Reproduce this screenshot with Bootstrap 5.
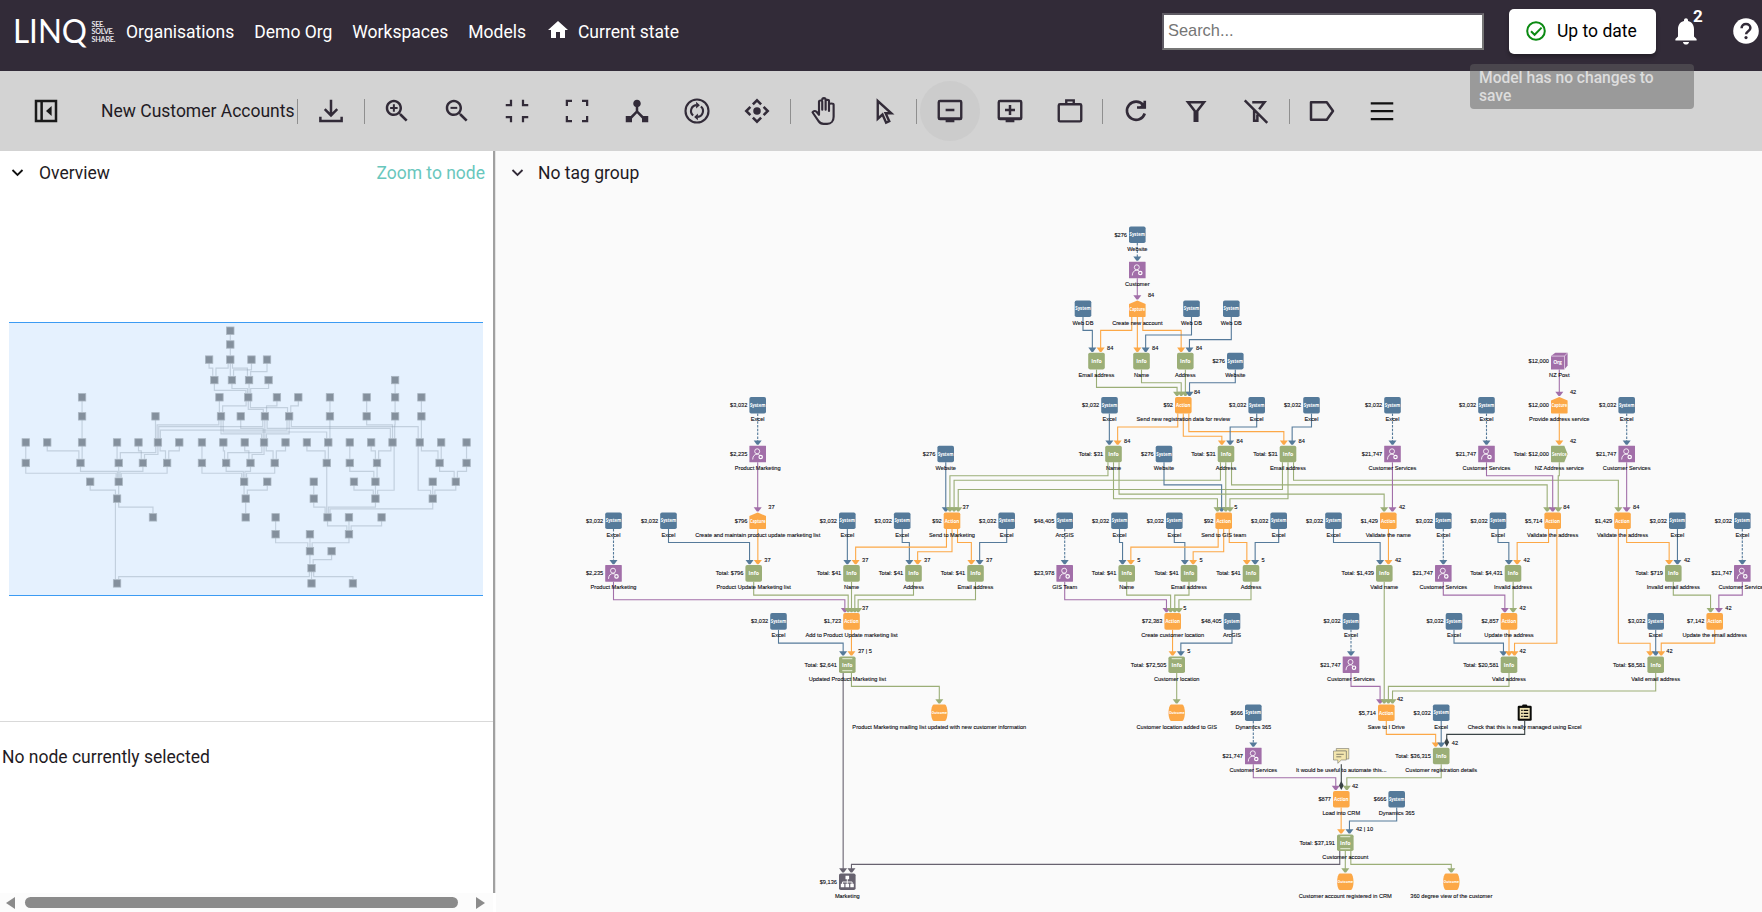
<!DOCTYPE html>
<html lang="en">
<head>
<meta charset="utf-8">
<title>LINQ - New Customer Accounts</title>
<link href="https://cdn.jsdelivr.net/npm/bootstrap@5.3.0/dist/css/bootstrap.min.css" rel="stylesheet">
<style>
body{font-family:Roboto,"Liberation Sans",sans-serif;font-size:17.5px;color:#1f1b24;overflow:hidden;background:#fff}
.topbar{height:71px;background:#322b38;padding-left:12px;flex:none}
.topbar .crumb{color:#fff;text-decoration:none;margin-right:20px;white-space:nowrap;line-height:24px}
.logo{width:106px;height:34px;margin-right:8px;flex:none}
.search{width:322px;height:37px;border:2px solid #767676;border-color:#5f5b64 #767676 #767676 #5f5b64;border-radius:0;font:16.4px "Liberation Sans",sans-serif;padding:0 4px 2px;margin-right:25px}
.search::placeholder{color:#757575}
.btn-state{width:147px;height:45px;background:#fff;border-radius:5px;box-shadow:0 3px 4px rgba(0,0,0,.3);font-size:17.5px;color:#000;padding:0 0 0 16px;margin-right:18px}
.bell{width:24px;height:30px;margin-right:34px}
.bell sup{position:absolute;left:19px;top:-10px;font:700 17px Roboto,sans-serif;color:#fff}
.hint{position:absolute;left:1470px;top:64px;width:224px;height:45px;border-radius:4px;background:rgba(97,97,97,.5);color:rgba(255,255,255,.68);font-weight:500;font-size:15.6px;line-height:18px;padding:5px 9px;z-index:5}
.toolbar{height:80px;background:#d3d3d3;padding-left:16px;flex:none}
.tool{width:60px;height:60px;border:0;background:none;border-radius:50%;padding:0;flex:none;display:flex;align-items:center;justify-content:center;color:#322b38}
.tool svg{width:30px;height:30px}
.tool.on{background:#cccccc}
.rule{width:6.2px;height:25px;flex:none;display:flex;justify-content:center}
.rule::before{content:"";width:1px;background:#8f8f8f}
.model-name{width:218px;padding-left:25px;white-space:nowrap}
.side{width:493px;flex:none;background:#fff}
.split{width:3px;background:linear-gradient(90deg,#a0a0a0 67%,#e4e4e4 67%);flex:none;margin-bottom:19px}
.head{height:44px;padding-left:10px;flex:none}
.head svg{width:16px;height:16px;margin-right:13px}
.zoomlink{color:#69c7bd;text-decoration:none}
.mapwrap{height:527px;border-bottom:1px solid #d9d9d9;padding:127px 0 0 9px}
.mini{width:474px;height:274px;background:#e5f1fe;border-top:1px solid #3b9bf3;border-bottom:1px solid #3b9bf3;display:block}
.sbar{height:19px;padding:0 0 0 5px;background:#fcfcfc}
.sbar .thumb{height:11px;width:433px;border-radius:6px;background:#8b8b8b;margin:0 17px 0 9px}
.canvas{background:#fafafa;min-width:0}
.graph{display:block;width:1266px;height:717px}
.graph text{font-family:"Liberation Sans",Arial,sans-serif;font-size:5.67px;fill:#08080e;stroke:#08080e;stroke-width:.1px}
.graph .tag{fill:#fff;stroke:none;font-weight:700;font-family:"Open Sans","Liberation Sans",sans-serif}
</style>
</head>
<body>
<div class="d-flex flex-column vh-100">
<nav class="topbar d-flex align-items-start position-relative">
  <div class="d-flex align-items-center flex-grow-1" style="height:63px">
    <svg class="logo" viewBox="-3 0 106 34">
      <text x="-2" y="28" font-family="Lato" font-weight="400" font-size="33.5" fill="#fff" textLength="74" lengthAdjust="spacingAndGlyphs">LINQ</text>
      <g font-family="Lato" font-weight="700" font-size="7.2" fill="#e8e6ea"><text x="76.500" y="11.500" textLength="13">SEE.</text><text x="76.500" y="19.200" textLength="22.500">SOLVE.</text><text x="76.500" y="26.900" textLength="24">SHARE.</text></g>
    </svg>
    <a class="crumb" href="#">Organisations</a>
    <a class="crumb" href="#">Demo Org</a>
    <a class="crumb" href="#">Workspaces</a>
    <a class="crumb" href="#">Models</a>
    <a class="crumb d-flex align-items-center" href="#"><svg width="24" height="24" viewBox="0 0 24 24" fill="#fff" class="me-2" style="margin-top:-3px"><path d="M10 20v-6h4v6h5v-8h3L12 3 2 12h3v8z"/></svg>Current state</a>
  </div>
  <div class="d-flex align-items-center" style="height:62px">
    <input class="search" placeholder="Search...">
    <button class="btn btn-state d-flex align-items-center"><svg width="20" height="20" viewBox="0 0 20 20" fill="none" stroke="#0b8a12" stroke-width="2" class="me-0"><circle cx="10" cy="10" r="8.8"/><path d="M5 10.2l3.6 3.6L15.6 6.6"/></svg><span style="margin-left:11px">Up to date</span></button>
    <div class="bell position-relative"><svg width="24" height="30" viewBox="0 0 24 30" fill="#fff"><path d="M12 28.5c1.7 0 3-1.2 3-2.6H9c0 1.4 1.3 2.6 3 2.6zM20 20.5v-7.3c0-4.2-2.2-7.2-6-8.1v-.8C14 3 13.100 2.200 12 2.200S10 3 10 4.300v.8c-3.800.9-6 3.900-6 8.100v7.300l-2.600 2.600v1.400h21.200v-1.400z"/></svg><sup>2</sup></div>
    <svg width="28" height="28" viewBox="0 0 28 28" style="margin-right:2px"><circle cx="14" cy="14" r="12.800" fill="#fff"/><path d="M9.600 11.200C9.600 8.500 11.500 7 14 7s4.400 1.600 4.400 4c0 3.200-4.300 3.200-4.300 6.200" fill="none" stroke="#322b38" stroke-width="2.500"/><circle cx="14" cy="20.600" r="1.600" fill="#322b38"/></svg>
  </div>
  <div class="hint">Model has no changes to save</div>
</nav>

<div class="toolbar d-flex align-items-center">
  <button class="tool" style="color:#1a1a1a"><svg viewBox="0 0 24 24"><path fill="none" stroke="currentColor" stroke-width="2" d="M4 4h16v16H4zM8.500 4v16"/><path fill="currentColor" d="M16.500 8v8l-4.500-4z"/></svg></button>
  <div class="model-name">New Customer Accounts</div>
  <div class="rule"></div>
  <button class="tool" style="margin-left:1px"><svg viewBox="0 0 24 24"><path fill="none" stroke="currentColor" stroke-width="2" d="M12 3v12M7 10.500l5 5 5-5M3.500 16.500V20h17v-3.500"/></svg></button>
  <div class="rule"></div>
  <button class="tool"><svg viewBox="0 0 24 24" fill="currentColor"><path d="M15.500 14h-.79l-.28-.27C15.410 12.590 16 11.110 16 9.500 16 5.910 13.090 3 9.500 3S3 5.910 3 9.500 5.910 16 9.500 16c1.610 0 3.090-.59 4.230-1.570l.27.28v.79l5 4.990L20.490 19l-4.990-5zm-6 0C7.010 14 5 11.990 5 9.500S7.010 5 9.500 5 14 7.010 14 9.500 11.990 14 9.500 14z"/><path d="M12.500 10.300h-2.200v2.200H8.700v-2.200H6.500V8.700h2.200V6.500h1.600v2.200h2.200z"/></svg></button>
  <button class="tool"><svg viewBox="0 0 24 24" fill="currentColor"><path d="M15.500 14h-.79l-.28-.27C15.410 12.590 16 11.110 16 9.500 16 5.910 13.090 3 9.500 3S3 5.910 3 9.500 5.910 16 9.500 16c1.610 0 3.090-.59 4.230-1.570l.27.28v.79l5 4.990L20.490 19l-4.990-5zm-6 0C7.010 14 5 11.990 5 9.500S7.010 5 9.500 5 14 7.010 14 9.500 11.990 14 9.500 14z"/><path d="M6.800 8.700h5.400v1.600H6.800z"/></svg></button>
  <button class="tool"><svg viewBox="0 0 24 24" fill="none" stroke="currentColor" stroke-width="1.800"><path d="M3 7.200h4.200V3M16.800 3v4.200H21M3 16.800h4.200V21M21 16.800h-4.200V21"/></svg></button>
  <button class="tool"><svg viewBox="0 0 24 24" fill="none" stroke="currentColor" stroke-width="1.800"><path d="M3.900 8V3.900H8M16 3.900h4.100V8M3.900 16v4.100H8M20.100 16v4.100H16"/></svg></button>
  <button class="tool"><svg viewBox="0 0 24 24" fill="currentColor"><path d="M17 16l-4-4V8.820C14.160 8.400 15 7.300 15 6c0-1.660-1.340-3-3-3S9 4.340 9 6c0 1.300.84 2.400 2 2.820V12l-4 4H3v5h5v-3.050l4-4.200 4 4.200V21h5v-5h-4z"/></svg></button>
  <button class="tool"><svg viewBox="0 0 24 24" fill="none" stroke="currentColor" stroke-width="1.700"><circle cx="12" cy="12" r="9.200"/><path d="M8.900 15.600A4.700 4.700 0 0 1 11.500 7.300M15.100 8.400a4.700 4.700 0 0 1-2.600 8.300"/><path fill="currentColor" stroke="none" d="M11.300 4.600l3 2.700-3 2.700zM12.700 14l-3 2.700 3 2.700z"/></svg></button>
  <button class="tool"><svg viewBox="0 0 24 24" fill="none" stroke="currentColor" stroke-width="2"><path d="M8.700 6.700L12 3.400l3.300 3.300M8.700 17.300l3.300 3.300 3.300-3.300M6.700 8.700L3.400 12l3.300 3.300M17.300 8.700l3.300 3.300-3.300 3.300"/><circle cx="12" cy="12" r="3" fill="currentColor" stroke="none"/></svg></button>
  <div class="rule"></div>
  <button class="tool"><svg viewBox="0 0 24 24" fill="none" stroke="currentColor" stroke-width="1.700" stroke-linejoin="round" stroke-linecap="round"><path d="M8 12.500V4.400M8 4.400c0-1 2.600-1 2.600 0V11M10.600 3c0-1.700 2.700-1.700 2.700 0v8M13.300 4c0-1.200 2.700-1.200 2.700 0v8M16 7c0-1.400 3.700-1.400 3.700 0v9.500c0 3.500-2 5.800-5.200 5.800h-2.800c-2 0-3.200-.7-4.200-2.400L2.800 13c1-1.400 2.400-1.200 3.200-.4l2 2.400V12"/></svg></button>
  <button class="tool"><svg viewBox="0 0 24 24" fill="none" stroke="currentColor" stroke-width="1.900"><path d="M7 4v14.200l3.800-3.400 2.900 6.500 2.500-1.100-2.900-6.400h4.600z"/></svg></button>
  <div class="rule"></div>
  <button class="tool on"><svg viewBox="0 0 24 24" fill="none" stroke="currentColor" stroke-width="1.900"><rect x="3" y="4" width="18" height="14.500" rx="1"/><path d="M8.500 11.200h7M3 18h18M8.500 20h7" stroke-width="2"/></svg></button>
  <button class="tool"><svg viewBox="0 0 24 24" fill="none" stroke="currentColor" stroke-width="1.900"><rect x="3" y="4" width="18" height="14.500" rx="1"/><path d="M8 11.200h8M12 7.200v8M3 18h18M8.500 20h7" stroke-width="2"/></svg></button>
  <button class="tool"><svg viewBox="0 0 24 24" fill="none" stroke="currentColor" stroke-width="1.900"><rect x="3" y="6.600" width="18" height="13.700" rx="1"/><path d="M9 6.600V3.500h6v3.100"/></svg></button>
  <div class="rule"></div>
  <button class="tool"><svg viewBox="0 0 24 24" fill="none" stroke="currentColor" stroke-width="2.100"><path d="M17.800 7.300A7.300 7.300 0 1 0 19 14"/><path d="M19 3.800v5.400h-6.200"/><path d="M19.500 4v5.700h-5.700z" fill="currentColor" stroke="none"/></svg></button>
  <button class="tool"><svg viewBox="0 0 24 24" fill="none" stroke="currentColor" stroke-width="2"><path d="M5.600 5h12.800L13 12v7.800h-2V12z"/></svg></button>
  <button class="tool"><svg viewBox="0 0 24 24" fill="none" stroke="currentColor" stroke-width="2"><path d="M9 5h9.800l-4.300 5.600M10.500 11.500v8.300h2.600v-5M3 3.500l18 18"/></svg></button>
  <div class="rule"></div>
  <button class="tool"><svg viewBox="0 0 24 24" fill="none" stroke="currentColor" stroke-width="2" stroke-linejoin="round"><path d="M3.200 5h12.600l5 7-5 7H3.200z"/></svg></button>
  <button class="tool" style="color:#111"><svg viewBox="0 0 24 24" fill="none" stroke="currentColor" stroke-width="2"><path d="M3 5h18M3 12h18M3 19h18" transform="translate(0 1.300) scale(1 .9)"/></svg></button>
</div>

<div class="d-flex flex-grow-1" style="min-height:0">
  <aside class="side d-flex flex-column">
    <div class="head d-flex align-items-center"><svg viewBox="0 0 16 16" fill="none" stroke="#111" stroke-width="1.800"><path d="M2.500 5L7.500 10l5-5"/></svg><span>Overview</span><a class="zoomlink ms-auto me-2" href="#">Zoom to node</a></div>
    <div class="mapwrap"><svg class="mini" id="mini" viewBox="9 323 474 272"></svg></div>
    <div class="flex-grow-1" style="padding:22px 2px">No node currently selected</div>
    <div class="sbar d-flex align-items-center"><svg width="11" height="12" viewBox="0 0 11 12"><path d="M10 0v12L1 6z" fill="#8b8b8b"/></svg><div class="thumb"></div><svg width="11" height="12" viewBox="0 0 11 12"><path d="M1 0v12l9-6z" fill="#8b8b8b"/></svg></div>
  </aside>
  <div class="split"></div>
  <main class="canvas flex-grow-1">
    <div class="head d-flex align-items-center" style="padding-left:13px"><svg viewBox="0 0 16 16" fill="none" stroke="#322b38" stroke-width="1.800"><path d="M3.500 5L8.500 10l5-5"/></svg><span>No tag group</span></div>
    <svg class="graph" id="graph" viewBox="496 195 1266 717"></svg>
  </main>
</div>
</div>
<script src="https://cdn.jsdelivr.net/npm/bootstrap@5.3.0/dist/js/bootstrap.bundle.min.js"></script>
<script>
const B='#557a9a',O='#fca847',G='#9bae77',P='#a26fa9',D='#67626f',K='#3b4446';
const colour={S:B,P:P,C:O,A:O,U:O,I:G,J:G,L:G,V:G,R:P,M:D,N:K,T:K};
// rows: y, then nodes as [id, x, type, label, cost, count]
const rows=[
[234.7,['a1',1137.3,'S','Website','$276']],
[270,['b1',1137.3,'P','Customer']],
[308.7,['c1',1083,'S','Web DB'],['c2',1137.3,'C','Create new account','','84'],['c3',1191.5,'S','Web DB'],['c4',1231.3,'S','Web DB']],
[361.1,['d1',1096.5,'I','Email address','','84'],['d2',1141.5,'I','Name','','84'],['d3',1185.3,'I','Address','','84'],['d4',1235.3,'S','Website','$276'],['d5',1559.3,'R','NZ Post','$12,000']],
[405.3,['e0',757.7,'S','Excel','$3,032'],['e1',1109.5,'S','Excel','$3,032'],['e2',1183.3,'A','Send new registration data for review','$92','84'],['e3',1256.7,'S','Excel','$3,032'],['e4',1311.5,'S','Excel','$3,032'],['e5',1392.5,'S','Excel','$3,032'],['e6',1486.5,'S','Excel','$3,032'],['e7',1559.3,'C','Provide address service','$12,000','42'],['e8',1626.7,'S','Excel','$3,032']],
[454,['f0',757.7,'P','Product Marketing','$2,235'],['f1',945.7,'S','Website','$276'],['f2',1113.5,'I','Name','Total: $31','84'],['f3',1164,'S','Website','$276'],['f4',1226,'I','Address','Total: $31','84'],['f5',1288,'I','Email address','Total: $31','84'],['f6',1392.5,'P','Customer Services','$21,747'],['f7',1486.5,'P','Customer Services','$21,747'],['f8',1559.3,'V','NZ Address service','Total: $12,000','42'],['f9',1626.7,'P','Customer Services','$21,747']],
[520.8,['g0',613.5,'S','Excel','$3,032'],['g1',668.5,'S','Excel','$3,032'],['g2',757.7,'C','Create and maintain product update marketing list','$796','37'],['g3',847.3,'S','Excel','$3,032'],['g4',902.2,'S','Excel','$3,032'],['g5',952,'A','Send to Marketing','$92','37'],['g6',1006.7,'S','Excel','$3,032'],['g7',1064.7,'S','ArcGIS','$48,405'],['g8',1119.5,'S','Excel','$3,032'],['g9',1174.3,'S','Excel','$3,032'],['ga',1223.7,'A','Send to GIS team','$92','5'],['gb',1278.7,'S','Excel','$3,032'],['gc',1333.5,'S','Excel','$3,032'],['gd',1388.3,'A','Validate the name','$1,429','42'],['ge',1443.3,'S','Excel','$3,032'],['gf',1498,'S','Excel','$3,032'],['gg',1552.7,'A','Validate the address','$5,714','84'],['gh',1622.5,'A','Validate the address','$1,429','84'],['gi',1677.3,'S','Excel','$3,032'],['gj',1742.3,'S','Excel','$3,032']],
[573.4,['h0',613.5,'P','Product Marketing','$2,235'],['h1',753.7,'I','Product Update Marketing list','Total: $796','37'],['h2',851.5,'I','Name','Total: $41','37'],['h3',913.5,'I','Address','Total: $41','37'],['h4',975.5,'I','Email address','Total: $41','37'],['h5',1064.7,'P','GIS Team','$23,978'],['h6',1126.7,'I','Name','Total: $41','5'],['h7',1189,'I','Email address','Total: $41','5'],['h8',1251,'I','Address','Total: $41','5'],['h9',1384.3,'I','Valid name','Total: $1,439','42'],['ha',1443.3,'P','Customer Services','$21,747'],['hb',1513,'I','Invalid address','Total: $4,431','42'],['hc',1673.3,'I','Invalid email address','Total: $719','42'],['hd',1742.3,'P','Customer Services','$21,747']],
[621.4,['i0',778.5,'S','Excel','$3,032'],['i1',851.5,'A','Add to Product Update marketing list','$1,723','37'],['i2',1172.7,'A','Create customer location','$72,383','5'],['i3',1232,'S','ArcGIS','$48,405'],['i4',1351,'S','Excel','$3,032'],['i5',1454,'S','Excel','$3,032'],['i6',1509,'A','Update the address','$2,857','42'],['i7',1655.7,'S','Excel','$3,032'],['i8',1714.7,'A','Update the email address','$7,142','42']],
[664.7,['j0',847.3,'L','Updated Product Marketing list','Total: $2,641','37 | 5'],['j1',1176.7,'J','Customer location','Total: $72,505','5'],['j2',1351,'P','Customer Services','$21,747'],['j3',1509,'I','Valid address','Total: $20,581','42'],['j4',1655.7,'I','Valid email address','Total: $8,581','42']],
[712.7,['k0',939.3,'U','Product Marketing mailing list updated with new customer information'],['k1',1176.7,'U','Customer location added to GIS'],['k2',1253.3,'S','Dynamics 365','$666'],['k3',1386.3,'A','Save to I Drive','$5,714','42'],['k4',1441.2,'S','Excel','$3,032'],['k5',1524.7,'N','Check that this is really managed using Excel']],
[756,['l0',1253.3,'P','Customer Services','$21,747'],['l1',1341.3,'T','It would be useful to automate this...'],['l2',1441.2,'I','Customer registration details','Total: $36,315','42']],
[799.3,['m0',1341.3,'A','Load into CRM','$877','42'],['m1',1396.7,'S','Dynamics 365','$666']],
[842.7,['n0',1345.3,'L','Customer account','Total: $37,191','42 | 10']],
[881.8,['o0',847.3,'M','Marketing','$9,136'],['o1',1345.3,'U','Customer account registered in CRM'],['o2',1451.3,'U','360 degree view of the customer']]
];
const nodes={};
rows.forEach(([y,...list])=>list.forEach(([id,x,t,label,cost,n])=>nodes[id]={id,x,y,t,label,cost,n}));
// links: source target level of the bend, or its y when above 100
const links=`a1 b1 0;b1 c2 0;c1 d1 0;c2 d1 0;c2 d2 0;c2 d3 0;c3 d2 1;c4 d3 2;d1 e2 1;d2 e2 0;d3 e2 0;d4 e2 0;d5 e7 0;e0 f0 0;e1 f2 0;e2 f2 0;e2 f4 2;e2 f5 1;e3 f4 0;e4 f5 0;e5 f6 0;e6 f7 0;e7 f8 0;e8 f9 0;f0 g2 0;f1 g5 0;f2 g5 0;f4 g5 1;f5 g5 3;f3 ga 2;f2 ga 5;f4 ga 0;f5 ga 5;f2 gd 4;f4 gg 2;f5 gh 1;f6 gd 0;f7 gg 0;f8 gg 0;f9 gh 0;g0 h0 0;g1 h1 0;g2 h1 0;g3 h2 0;g4 h3 0;g5 h2 1;g5 h3 2;g5 h4 0;g6 h4 0;g7 h5 0;g8 h6 0;g9 h7 0;ga h6 1;ga h7 2;ga h8 0;gb h8 0;gc h9 0;gd h9 0;ge ha 0;gf hb 0;gg hb 0;gg j3 643.2;gh j4 643.2;gh hc 0;gi hc 0;gj hd 0;h0 i1 1;h1 i1 0;h2 i1 0;h3 i1 0;h4 i1 1;h5 i2 1;h6 i2 0;h7 i2 0;h8 i2 1;ha i6 0;hb i6 0;hc i8 0;hd i8 0;i0 j0 0;i1 j0 0;i2 j1 0;i3 j1 0;i4 j2 0;i5 j3 0;i6 j3 0;i7 j4 0;i8 j4 0;j0 o0 0;j0 k0 0;j1 k1 0;j2 k3 0;h9 k3 0;j3 k3 0;j4 k3 1;k2 l0 0;k3 l2 0;k4 l2 0;k5 l2 0;l0 m0 0;l1 m0 0;l2 m0 0;m0 n0 0;m1 n0 0;n0 o0 0;n0 o1 0;n0 o2 0`
 .split(';').map(s=>{const [a,b,l]=s.split(' ');return{s:nodes[a],t:nodes[b],l:+l}});
const W=16.6;
const port=(n,i,k)=>n.x+W*((i+.5)/k-.5);
Object.values(nodes).forEach(n=>{
  const outs=links.filter(e=>e.s===n).sort((a,b)=>(a.l>100&&n.id==='gg')-(b.l>100&&n.id==='gg')||(b.t.y>850&&b.t.x<900)-(a.t.y>850&&a.t.x<900)||a.t.x-b.t.x);
  outs.forEach((e,i)=>e.x1=port(n,i,outs.length));
  const ins=links.filter(e=>e.t===n).sort((a,b)=>a.s.x-b.s.x);
  ins.forEach((e,i)=>e.x2=port(n,i,ins.length));
});
const path=e=>{
  const y1=e.s.y+8.3,y2=e.t.y-11,b=e.l>100?e.l:e.s.y+21.7+4.6*e.l;
  return Math.abs(e.x1-e.x2)<.8?`M${e.x2} ${y1}V${y2}`:`M${e.x1} ${y1}V${b}H${e.x2}V${y2}`;
};
const word=(n,t,size,len,dy=2)=>`<text class="tag" x="${n.x-len/2}" y="${n.y+dy}" style="font-size:${size}px" textLength="${len}" lengthAdjust="spacingAndGlyphs">${t}</text>`;
const box=(n,c,r=1.8)=>`<rect x="${n.x-8.3}" y="${n.y-8.3}" width="${W}" height="${W}" rx="${r}" fill="${c}"/>`;
const g=(n,s)=>`<g transform="translate(${n.x} ${n.y})">${s}</g>`;
const draw={
 S:n=>box(n,B)+word(n,'System',5.6,15.4,1.6),
 A:n=>box(n,O)+word(n,'Action',5.6,14.6,1.8),
 I:n=>box(n,G)+word(n,'Info',6,10.4,2),
 J:n=>draw.I(n)+g(n,'<path d="M-5-6H5" stroke="#e9efdc"/>'),
 L:n=>draw.I(n)+g(n,'<path d="M-5-6H5M-5 6H5" stroke="#e9efdc"/>'),
 C:n=>g(n,`<path d="M-8.300-4.800L0-8.300l8.300 3.500v12.300q0 .8-.8.8h-15q-.8 0-.8-.8z" fill="${O}"/>`)+word(n,'Capture',4.4,15.4,1.8),
 U:n=>g(n,`<path d="M-5.500-8.300h11c1.600 0 2.700 4.800 2.700 8.300s-1.100 8.300-2.700 8.300h-11c-1.600 0-2.700-4.800-2.700-8.300s1.100-8.300 2.700-8.300z" fill="${O}"/>`)+word(n,'Outcome',3.9,15.6,1.5),
 V:n=>g(n,`<path d="M-7.500-8.300H5L8.300 0 5 8.300H-7.500q-.8 0-.8-.8v-15q0-.8.8-.8z" fill="${G}"/>`)+word(n,'Service',4.8,14.6,1.5),
 P:n=>box(n,P,.4)+g(n,'<g fill="none" stroke="#fff" stroke-width=".85"><circle cx="-.5" cy="-2.700" r="2.500"/><path d="M-5 5.500C-5 2-3 .2-.6.2c1 0 1.700.3 2.300.7"/></g><circle cx="3" cy="3" r="1.700" fill="none" stroke="#fff" stroke-width="1.200"/>'),
 R:n=>g(n,`<path d="M-8.300-5L-4-8.300H8.300V4.500L5 8.300H-8.300z" fill="${P}"/><path d="M-8-5H5.200V8M5.200-5L8-8" fill="none" stroke="#f3e6f5" stroke-width=".7"/>`)+`<text class="tag" x="${n.x-6}" y="${n.y+3}" style="font-size:5px" textLength="8.500">Org</text>`,
 M:n=>box(n,D)+g(n,'<path d="M0-3v5M-4.800 3V.2h9.600V3" fill="none" stroke="#fff" stroke-width=".9"/><path d="M-1.800-6h3.600v3.500h-3.600zM-6.500 2h3.500v3.500h-3.500zM-1.800 2h3.600v3.500h-3.600zM3 2h3.500v3.500H3z" fill="#fff"/>'),
 N:n=>g(n,'<rect x="-7" y="-7" width="14" height="15" rx="1.300" fill="#0b0b08"/><rect x="-2.500" y="-8.300" width="5" height="3" rx="1" fill="#0b0b08"/><path d="M-5-4.800H5V6H-5z" fill="#efe3b2"/><path d="M-3.500-2.300h1.500M-1-2.300h4.500M-3.500.7h1.500M-1 .7h4.500M-3.500 3.700h1.500M-1 3.700h4.500" stroke="#0b0b08" stroke-width="1.100"/>'),
 T:n=>g(n,'<g fill="#f3e6ae" stroke="#77756a" stroke-width=".6"><path d="M-5-7.500H7.500V3H5V-5H-5z"/><path d="M-7.800-5H5V4H0l-3.500 3.300V4h-4.300z"/></g><path d="M-5-1.700h7.500M-5 .8h5" stroke="#55534a" stroke-width=".7"/>')
};
let out='';
links.forEach(e=>{
  const toOrg=e.t.id==='o0',c=toOrg?D:colour[e.s.t],dash=e.s.t==='S'&&e.t.t==='P';
  out+=`<path d="${path(e)}" fill="none" stroke="${c}" stroke-width="1.100" ${dash?'stroke-dasharray="2.500 1.300"':''}/>`;
  const y=e.t.y-9.2;
  out+=e.s.t==='N'||e.s.t==='T'
   ?`<path d="M${e.x2} ${y-9}l2.400 4.500-2.400 4.500-2.400-4.500z" fill="${K}"/>`
   :`<path d="M${e.x2-4} ${y-4.300}h8l-3.200 4.300h-1.600z" fill="${c}"/>`;
});
Object.values(nodes).forEach(n=>{
  out+=draw[n.t](n);
  out+=`<text x="${n.x}" y="${n.y+16}" text-anchor="middle">${n.label}</text>`;
  if(n.cost)out+=`<text x="${n.x-10.3}" y="${n.y+2}" text-anchor="end">${n.cost}</text>`;
  if(n.n)out+=`<text x="${n.x+10.600}" y="${n.y-11.400}">${n.n}</text>`;
});
document.getElementById('graph').innerHTML=out;
// overview: the same graph at a smaller scale
const s=.3905,tf=`translate(${230.3-1137.3*s} ${330.7-234.7*s}) scale(${s})`;
document.getElementById('mini').innerHTML=`<g transform="${tf}"><g fill="none" stroke="#8496a6" stroke-opacity=".36" stroke-width="3">${links.map(e=>`<path d="${path(e)}"/>`).join('')}</g>${Object.values(nodes).map(n=>`<rect x="${n.x-9.500}" y="${n.y-9.500}" width="19" height="19" fill="#84909d" stroke="#a9b5c1" stroke-width="2"/>`).join('')}</g>`;
</script>
</body>
</html>
